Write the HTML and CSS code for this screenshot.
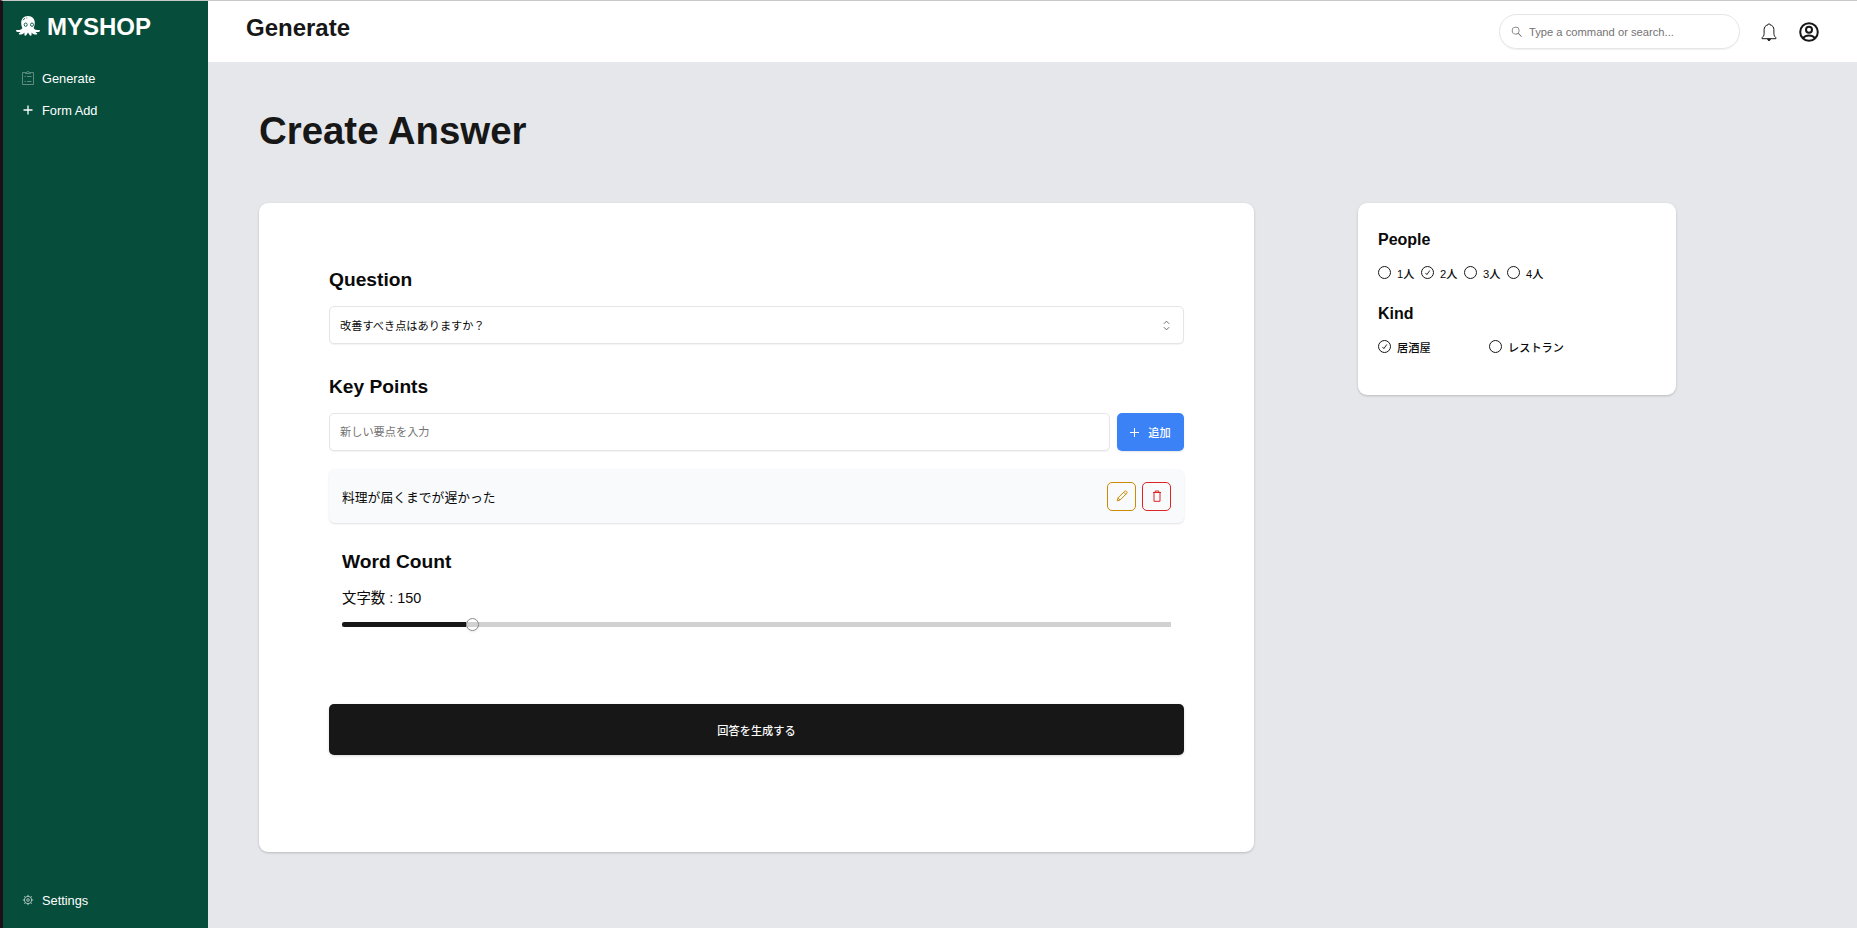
FILE: index.html
```html
<!DOCTYPE html>
<html lang="ja">
<head>
  <meta charset="UTF-8" />
  <meta name="viewport" content="width=device-width, initial-scale=1" />
  <title>Generate - MYSHOP</title>
  <link rel="stylesheet" href="styles.css">
</head>
<body>
  <div class="app">
    <aside class="sidebar">
      <a class="logo" href="#">
        <svg class="logo-icon" viewBox="0 0 24 20" fill="#fff">
          <path d="M12 0C7.6 0 5.2 3 5.2 6.8c0 2.400.6 3.900 1.200 5.200-.7 1.100-1.800 2-3.400 2-1 0-1.800-.2-2.400 0-.9.300-.7 1.300.2 1.700 1.200.5 2.600.5 3.700.2-.8.900-1.900 1.100-1.700 2 .2.900 2.100.9 3.400.3 1-.4 1.700-1 2.300-1.600-.2 1.200-.3 2.900.6 3.200.9.300 1.800-1.300 2.900-3.200 1.100 1.900 2 3.500 2.900 3.200.9-.3.800-2 .6-3.200.6.6 1.300 1.200 2.300 1.600 1.300.6 3.200.6 3.400-.3.200-.9-.9-1.100-1.700-2 1.100.3 2.500.3 3.700-.2.900-.4 1.100-1.400.2-1.700-.6-.2-1.400 0-2.400 0-1.600 0-2.700-.9-3.400-2 .6-1.300 1.200-2.800 1.200-5.200C18.800 3 16.400 0 12 0z"/>
          <ellipse cx="9.700" cy="8.700" rx="1.500" ry="1.700" fill="#fff" stroke="#064e3b" stroke-width=".9"/>
          <ellipse cx="16" cy="8.700" rx="1.500" ry="1.700" fill="#fff" stroke="#064e3b" stroke-width=".9"/>
          <path d="M7 4.200c.6-1 1.300-1.500 2.100-1.800M10.500 2h.8" fill="none" stroke="#064e3b" stroke-width=".9"/>
        </svg>
        <span>MYSHOP</span>
      </a>
      <nav class="menu">
        <a class="menu-item" href="#">
          <svg class="menu-icon dim" viewBox="0 0 12 14" fill="none" stroke="#fff">
            <path d="M3.500 1.500h-3v12h11v-12h-3M3.500 2.500v-1h1.300c0-.7.500-1 1.200-1s1.200.3 1.200 1h1.300v1zM2.500 5.500h1.200M5 5.500h4.500M2.500 10.500h1.200M5 10.500h4.500"/>
          </svg>
          <span>Generate</span>
        </a>
        <a class="menu-item" href="#">
          <svg class="menu-icon" viewBox="0 0 12 14" fill="none" stroke="#fff" stroke-width="1.300">
            <path d="M6 2.500v9M1.500 7h9"/>
          </svg>
          <span>Form Add</span>
        </a>
      </nav>
      <a class="menu-item settings" href="#">
        <svg class="menu-icon gear" viewBox="0 0 12 12" fill="none" stroke="#fff">
          <circle cx="6" cy="6" r="3.700"/>
          <circle cx="6" cy="6" r="1.300"/>
          <path d="M6 .8v1.500M6 9.700v1.500M.8 6h1.500M9.700 6h1.500M2.300 2.300l1 1M8.700 8.700l1 1M2.300 9.700l1-1M8.700 3.300l1-1"/>
        </svg>
        <span>Settings</span>
      </a>
    </aside>

    <div class="page">
      <header class="topbar">
        <h2 class="topbar-title">Generate</h2>
        <div class="topbar-right">
          <label class="search">
            <svg class="search-icon" viewBox="0 0 15 15" fill="#737373">
              <path fill-rule="evenodd" d="M10 6.500a3.500 3.500 0 1 1-7 0 3.500 3.500 0 0 1 7 0zm-.7 3.500a4.500 4.500 0 1 1 .7-.7l3.850 3.850-.7.7L9.300 10z"/>
            </svg>
            <input type="text" placeholder="Type a command or search..." />
          </label>
          <svg class="bell" viewBox="0 0 16 18" fill="none" stroke="#171717">
            <path d="M7 1.800c0-1.400 2-1.400 2 0 2.600.5 3.900 2.500 3.900 4.900v3.800c0 2 .7 3 2 4.200v1H1.100v-1c1.300-1.200 2-2.200 2-4.200V6.700C3.100 4.300 4.400 2.300 7 1.800z"/>
            <path d="M6.700 16.200a1.300 1.300 0 0 0 2.600 0z" fill="#171717"/>
          </svg>
          <svg class="account" viewBox="0 0 20 20" fill="none" stroke="#171717" stroke-width="2">
            <circle cx="10" cy="10" r="8.800"/>
            <circle cx="10" cy="7.800" r="3"/>
            <path d="M4 16c1.500-1.800 3.600-2.600 6-2.600s4.500.8 6 2.600"/>
          </svg>
        </div>
      </header>

      <main class="content">
        <h1 class="page-title">Create Answer</h1>
        <div class="columns">
          <section class="card form-card">
            <h3 class="label">Question</h3>
            <button class="field select">
              <span>改善すべき点はありますか？</span>
              <svg class="caret" viewBox="0 0 15 15" fill="none" stroke="#525252">
                <path d="M4.500 5.500l3-3 3 3M4.500 9.500l3 3 3-3"/>
              </svg>
            </button>

            <h3 class="label label-points">Key Points</h3>
            <div class="add-row">
              <input class="field" type="text" placeholder="新しい要点を入力" />
              <button class="add-button">
                <svg class="add-icon" viewBox="0 0 9 9" fill="none" stroke="#fff">
                  <path d="M4.500 0v9M0 4.500h9"/>
                </svg>
                <span>追加</span>
              </button>
            </div>

            <div class="point">
              <span class="point-text">料理が届くまでが遅かった</span>
              <button class="icon-button edit">
                <svg viewBox="0 0 12 12" fill="none" stroke="#ca8a04">
                  <path d="M1.200 10.800l.8-2.900L8.700 1.200c.5-.5 1.200-.4 1.600 0l.5.500c.4.400.5 1.100 0 1.600L4.100 10zM2 7.900L4.100 10M7.700 2.200l2.100 2.100"/>
                </svg>
              </button>
              <button class="icon-button delete">
                <svg viewBox="0 0 12 12" fill="none" stroke="#dc2626">
                  <path d="M2 2.500h8M4.200 2V1h3.600v1M3 2.500v8.800h6V2.500"/>
                </svg>
              </button>
            </div>

            <div class="word-count">
              <h3 class="label">Word Count</h3>
              <p class="count-text">文字数 : 150</p>
              <div class="slider">
                <div class="slider-range"></div>
                <div class="slider-thumb"></div>
              </div>
            </div>

            <button class="submit">回答を生成する</button>
          </section>

          <section class="card side-card">
            <h4 class="side-label">People</h4>
            <div class="options">
              <span class="radio"></span><span class="people">1人</span>
              <span class="radio"><svg viewBox="0 0 12 12"><path d="M3.800 6.500l1.500 1.800 3.200-4.500"/></svg></span><span class="people">2人</span>
              <span class="radio"></span><span class="people">3人</span>
              <span class="radio"></span><span class="people">4人</span>
            </div>
            <h4 class="side-label">Kind</h4>
            <div class="kinds">
              <div class="options">
                <span class="radio"><svg viewBox="0 0 12 12"><path d="M3.800 6.500l1.500 1.800 3.200-4.500"/></svg></span><span>居酒屋</span>
              </div>
              <div class="options">
                <span class="radio"></span><span>レストラン</span>
              </div>
            </div>
          </section>
        </div>
      </main>
    </div>
  </div>
</body>
</html>
```
FILE: styles.css
```css
* {
  box-sizing: border-box;
}

body {
  margin: 0;
  font-family: "Liberation Sans", "Noto Sans CJK JP", sans-serif;
  font-size: 12.8px;
  color: #0a0a0a;
  background-color: #e5e7eb;
}

h1, h2, h3, h4, p {
  margin: 0;
}

button, input {
  font-family: inherit;
  font-size: 11.2px;
  color: inherit;
}

a {
  color: inherit;
  text-decoration: none;
}

.app {
  display: flex;
  height: 100vh;
  border-top: 1px solid #c8c8c8;
  border-left: 3px solid #1c1016;
}

.sidebar {
  display: flex;
  flex-direction: column;
  width: 205px;
  padding: 13px 13px 18px;
  color: #fff;
  background-color: #064e3b;
}

.logo {
  display: flex;
  gap: 7px;
  font-size: 24px;
  font-weight: bold;
  line-height: 26px;
}

.logo-icon {
  width: 24px;
  height: 20px;
  margin-top: 2px;
}

.menu {
  flex: 1;
  padding-top: 28px;
}

.menu-item {
  display: flex;
  align-items: center;
  gap: 8px;
  height: 20px;
  margin-bottom: 12px;
  padding-left: 6px;
}

.menu-icon {
  width: 12px;
  height: 14px;
}

.menu-icon.dim {
  opacity: 0.35;
}

.menu-icon.gear {
  opacity: 0.65;
}

.settings {
  margin-bottom: 0;
}

.page {
  flex: 1;
}

.topbar {
  display: flex;
  justify-content: space-between;
  height: 61px;
  padding: 0 38px;
  background-color: #fff;
}

.topbar-title {
  padding-top: 13px;
  font-size: 24px;
  line-height: 28px;
  color: #171717;
}

.topbar-right {
  display: flex;
  align-items: center;
  height: 61px;
}

.search {
  display: flex;
  align-items: center;
  width: 241px;
  height: 35px;
  padding: 0 10px;
  border: 1px solid #e5e5e5;
  border-radius: 18px;
  box-shadow: 0 1px 1px rgba(0, 0, 0, 0.06);
}

.search-icon {
  width: 13px;
  height: 13px;
  margin-right: 6px;
}

.search input {
  flex: 1;
  padding: 0;
  border: 0;
  outline: none;
}

.search input::placeholder,
.field::placeholder {
  color: #737373;
}

.bell {
  width: 16px;
  height: 18px;
  margin-left: 21px;
}

.account {
  width: 20px;
  height: 20px;
  margin-left: 22px;
}

.content {
  padding: 50px 51px 0;
}

.page-title {
  margin-bottom: 53px;
  font-size: 38.4px;
  line-height: 38px;
  color: #171717;
}

.columns {
  display: flex;
  align-items: flex-start;
  gap: 104px;
}

.card {
  background-color: #fff;
  border-radius: 9px;
  box-shadow: 0 1px 3px rgba(0, 0, 0, 0.12), 0 1px 2px rgba(0, 0, 0, 0.08);
}

.form-card {
  width: 995px;
  height: 649px;
  padding: 63px 70px;
}

.label {
  margin-bottom: 12px;
  font-size: 19.2px;
  line-height: 28px;
}

.label-points {
  margin-top: 29px;
}

.field {
  width: 100%;
  height: 38px;
  padding: 0 10px;
  background-color: #fff;
  border: 1px solid #e5e5e5;
  border-radius: 5px;
  box-shadow: 0 1px 1px rgba(0, 0, 0, 0.05);
}

.select {
  display: flex;
  align-items: center;
  justify-content: space-between;
}

.caret {
  width: 13px;
  height: 13px;
}

.add-row {
  display: flex;
  gap: 7px;
}

.add-button {
  display: flex;
  align-items: center;
  justify-content: center;
  gap: 9px;
  flex: none;
  width: 67px;
  height: 38px;
  padding: 0;
  font-weight: 500;
  color: #fff;
  background-color: #3b82f6;
  border: 0;
  border-radius: 5px;
  box-shadow: 0 1px 2px rgba(0, 0, 0, 0.1);
}

.add-icon {
  width: 9px;
  height: 9px;
}

.point {
  display: flex;
  align-items: center;
  gap: 6px;
  height: 54px;
  margin-top: 18px;
  padding: 0 13px;
  background-color: #f9fafb;
  border-radius: 6px;
  box-shadow: 0 1px 2px rgba(0, 0, 0, 0.12);
}

.point-text {
  flex: 1;
}

.icon-button {
  display: flex;
  align-items: center;
  justify-content: center;
  width: 29px;
  height: 29px;
  padding: 0;
  background: none;
  border: 1px solid;
  border-radius: 5px;
}

.icon-button svg {
  width: 12px;
  height: 12px;
}

.edit {
  border-color: #ca8a04;
}

.delete {
  border-color: #dc2626;
}

.word-count {
  padding: 25px 13px 0;
}

.count-text {
  font-size: 14.4px;
  line-height: 20px;
}

.slider {
  display: flex;
  align-items: center;
  height: 13px;
  margin-top: 10px;
  background: linear-gradient(#d1d1d1, #d1d1d1) center / 100% 5px no-repeat;
}

.slider-range {
  width: 124px;
  height: 5px;
  background-color: #171717;
  border-radius: 3px 0 0 3px;
}

.slider-thumb {
  width: 13px;
  height: 13px;
  border: 1px solid #8b8b8b;
  border-radius: 50%;
  box-shadow: 0 1px 2px rgba(0, 0, 0, 0.1);
}

.submit {
  width: 100%;
  height: 51px;
  margin-top: 73px;
  font-weight: 500;
  color: #fafafa;
  background-color: #171717;
  border: 0;
  border-radius: 5px;
  box-shadow: 0 1px 3px rgba(0, 0, 0, 0.15);
}

.side-card {
  width: 318px;
  height: 192px;
  padding: 26px 20px;
}

.side-label {
  margin-bottom: 15px;
  font-size: 16px;
  line-height: 22px;
}

.options {
  display: flex;
  align-items: center;
  height: 13px;
  margin-bottom: 24px;
  font-size: 11.2px;
  font-weight: 500;
}

.people {
  width: 24px;
}

.radio {
  width: 13px;
  height: 13px;
  margin-right: 6px;
  border: 1px solid #171717;
  border-radius: 50%;
}

.radio svg {
  display: block;
  fill: none;
  stroke: #171717;
}

.kinds {
  display: grid;
  grid-template-columns: 111px 1fr;
}
```
